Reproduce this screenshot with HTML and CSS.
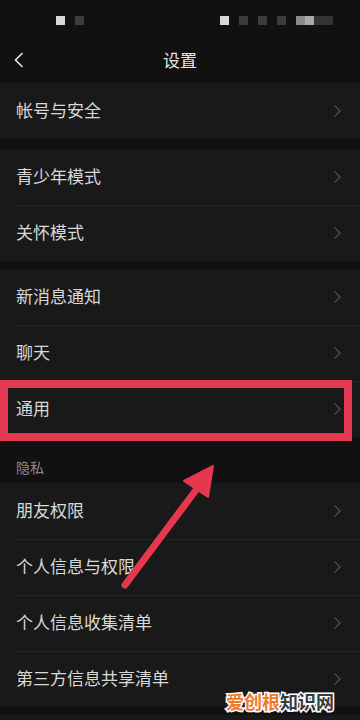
FILE: index.html
```html
<!DOCTYPE html>
<html lang="zh-CN">
<head>
  <meta charset="UTF-8">
  <meta name="viewport" content="width=device-width, initial-scale=1.0">
  <title>设置</title>
  <link rel="stylesheet" href="styles.css">
</head>
<body>
  <div class="page">
    <div class="status-bar">
      <div class="dots">
        <span class="dot light"></span>
        <span class="dot"></span>
      </div>
      <div class="dots">
        <span class="dot light"></span>
        <span class="dot"></span>
        <span class="dot"></span>
        <span class="dot"></span>
        <span class="dot mid"></span>
        <span class="dot mid2"></span>
        <span class="dot"></span>
      </div>
    </div>

    <div class="nav">
      <svg class="back" width="12" height="18" viewBox="0 0 12 18">
        <path d="M9.5 2 L2.5 9 L9.5 16" fill="none" stroke="#e8e8e8" stroke-width="1.6"/>
      </svg>
      <div class="title">设置</div>
    </div>

    <div class="group">
      <div class="row"><span>帐号与安全</span><i class="chev"></i></div>
    </div>

    <div class="group gap-10">
      <div class="row"><span>青少年模式</span><i class="chev"></i></div>
      <div class="row"><span>关怀模式</span><i class="chev"></i></div>
    </div>

    <div class="group gap-8">
      <div class="row"><span>新消息通知</span><i class="chev"></i></div>
      <div class="row"><span>聊天</span><i class="chev"></i></div>
      <div class="row"><span>通用</span><i class="chev"></i><div class="mark"></div></div>
    </div>

    <div class="section-label">隐私</div>

    <div class="group">
      <div class="row"><span>朋友权限</span><i class="chev"></i></div>
      <div class="row"><span>个人信息与权限</span><i class="chev"></i></div>
      <div class="row"><span>个人信息收集清单</span><i class="chev"></i></div>
      <div class="row"><span>第三方信息共享清单</span><i class="chev"></i></div>
    </div>

    <div class="group gap-8 tail"></div>
  </div>

  <!-- red pointer over the list -->
  <svg class="pointer" width="360" height="720" viewBox="0 0 360 720">
    <line x1="125" y1="585" x2="196" y2="490" stroke="#e5384f" stroke-width="7" stroke-linecap="round"/>
    <polygon points="213,466 184,481 208,497" fill="#e5384f" stroke="#e5384f" stroke-width="2" stroke-linejoin="round"/>
  </svg>

  <div class="watermark"><span class="wm-a">爱创根</span><span class="wm-b">知识网</span></div>
</body>
</html>
```

FILE: styles.css
```css
body {
  margin: 0;
  padding: 0;
  background: #111111;
  font-family: "Noto Sans CJK SC", "Noto Sans", sans-serif;
  color: #d9d9d9;
  width: 360px;
  height: 720px;
  overflow: hidden;
  position: relative;
}

.page {
  display: flex;
  flex-direction: column;
  height: 720px;
  overflow: hidden;
}

.status-bar {
  height: 40px;
  flex-shrink: 0;
  display: flex;
  justify-content: space-between;
  align-items: center;
  padding: 0 27px 0 56px;
}

.dots {
  display: flex;
  gap: 10px;
}

.dot {
  width: 9px;
  height: 9px;
  background: #3c3c3c;
}

.dot.light {
  background: #d8d8d8;
}

.dot.mid {
  background: #8a8a8a;
  margin-right: -10px;
}

.dot.mid2 {
  background: #a9a9a9;
  margin-right: -10px;
}

.status-bar .dots:last-child .dot:last-child {
  width: 19px;
  background: #333333;
}

.nav {
  height: 43px;
  flex-shrink: 0;
  display: flex;
  align-items: center;
  justify-content: center;
  position: relative;
}

.back {
  position: absolute;
  left: 13px;
  top: 11px;
}

.title {
  font-size: 17px;
  color: #e6e6e6;
  margin-top: -4px;
}

.group {
  background: #191919;
  flex-shrink: 0;
}

.gap-10 {
  margin-top: 10px;
}

.gap-8 {
  margin-top: 8px;
}

.tail {
  flex: 1;
  flex-shrink: 1;
}

.row {
  height: 56px;
  box-sizing: border-box;
  display: flex;
  align-items: center;
  justify-content: space-between;
  padding: 0 18px 3px 16px;
  font-size: 17px;
  position: relative;
}

.row + .row::before {
  content: "";
  position: absolute;
  top: 0;
  left: 16px;
  right: 0;
  height: 1px;
  background: #242424;
}

.chev {
  width: 7px;
  height: 7px;
  border-top: 1.5px solid #585858;
  border-right: 1.5px solid #585858;
  transform: rotate(45deg);
  margin-right: 3px;
  margin-top: 3px;
}

.mark {
  position: absolute;
  left: 0;
  right: 8px;
  top: -1px;
  bottom: -4px;
  border: 8px solid #e33a51;
}

.section-label {
  height: 46px;
  flex-shrink: 0;
  box-sizing: border-box;
  padding: 20px 0 0 16px;
  font-size: 14px;
  color: #8c8c8c;
}

.pointer {
  position: absolute;
  left: 0;
  top: 0;
  pointer-events: none;
}

.watermark {
  position: absolute;
  left: 226px;
  top: 688px;
  font-size: 18px;
  font-weight: bold;
}

.wm-a, .wm-b {
  -webkit-text-stroke: 3px #ffffff;
  paint-order: stroke fill;
}

.wm-a {
  color: #ee7a2a;
}

.wm-b {
  color: #3a3a3a;
}
```
